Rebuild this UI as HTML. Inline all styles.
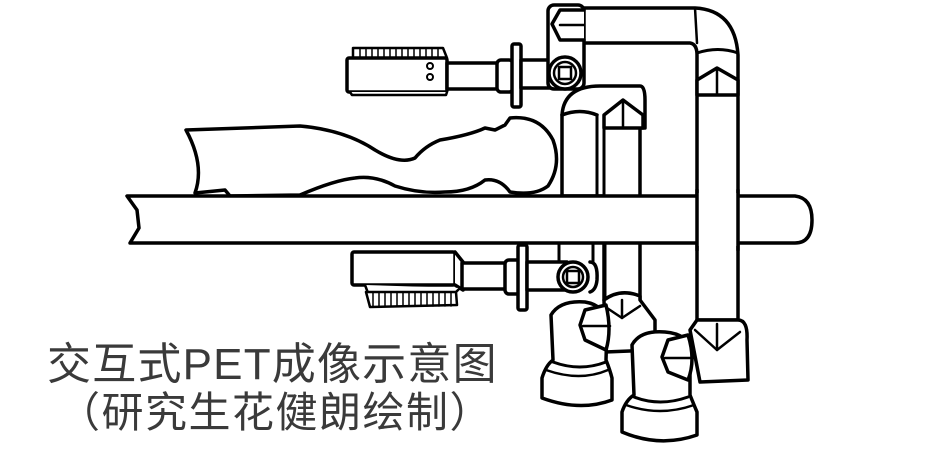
<!DOCTYPE html>
<html><head><meta charset="utf-8"><style>
html,body{margin:0;padding:0;background:#fff;width:952px;height:476px;overflow:hidden}
svg{position:absolute;left:0;top:0}
.t{position:absolute;font-family:"Liberation Sans","Noto Sans CJK SC",sans-serif;color:#3a3a3a;white-space:nowrap;line-height:1}
</style></head><body>
<svg width="952" height="476" viewBox="0 0 952 476" fill="#fff" stroke="#000" stroke-width="3.5" stroke-linejoin="round" stroke-linecap="round">
<!-- body -->
<path d="M186 130 Q240 128 300 126 Q345 130 375 150 Q400 165 415 158 Q425 146 440 140 Q470 135 485 128 L495 130 L505 125 L510 118 Q540 115 553 140 Q562 165 548 186 Q535 196 510 192 Q500 178 485 180 Q470 192 445 192 Q420 194 395 186 Q375 175 355 178 Q335 180 300 195 L230 196 L225 190 L195 193 Q205 165 186 130 Z"/>
<!-- upper detector -->
<path d="M353 48 L443 48 L447 58 L353 58 Z" stroke-width="2.5"/>
<g stroke-width="1.5"><path d="M360 48v9M366 48v9M372 48v9M378 48v9M384 48v9M390 48v9M396 48v9M402 48v9M408 48v9M414 48v9M420 48v9M426 48v9M432 48v9M438 48v9"/></g>
<rect x="347" y="58" width="100" height="34" rx="2"/>
<path d="M350 92 L352 95 L446 95 L447 92" stroke-width="2.5"/>
<circle cx="430" cy="66" r="3" stroke-width="2"/><circle cx="430" cy="77" r="3" stroke-width="2"/>
<rect x="447" y="63" width="52" height="26"/>
<rect x="497" y="60" width="16" height="32" rx="4"/>
<rect x="512" y="44" width="9" height="63" rx="2"/>
<rect x="521" y="60" width="30" height="28"/>
<!-- top pipe -->
<path d="M582 8 L695 8 Q735 10 738 55 L738 320 L697 320 L697 55 Q697 44 690 43 L582 43 Z"/>
<path d="M695 8 L697 43" stroke-width="2.5"/>
<path d="M697 53 Q718 46 738 53" stroke-width="3"/>
<rect x="548" y="5" width="36" height="84" rx="6"/>
<path d="M584 10 L560 10 L552 24 L560 40 L584 40" />
<path d="M560 25 L584 25" stroke-width="2.5"/>
<circle cx="565" cy="73" r="16"/><circle cx="565" cy="73" r="11" stroke-width="2.5"/><rect x="559" y="67" width="12" height="12" stroke-width="2.5"/>
<!-- vertical right cone -->
<path d="M697 80 L717 68 L738 80 L738 95 L697 95 Z"/>
<path d="M717 68 L717 95" stroke-width="2.5"/>
<!-- middle pipes -->
<path d="M562 196 L562 115 Q564 86 600 86 L640 86 Q645 86 645 100 L645 128 L640 128 L640 300 L604 300 L604 196 Z"/>
<path d="M597 115 L597 196 M604 115 L604 300" stroke-width="3"/>
<path d="M562 115 Q580 108 597 115"/>
<path d="M604 115 L623 100 L643 115 L643 128 L604 128 Z"/>
<path d="M623 100 L623 128" stroke-width="2.5"/>
<!-- table -->
<path d="M127 196 L795 196 Q812 198 812 220 Q812 243 795 243 L130 243 L139 228 L137 210 Z"/>
<rect x="698" y="193" width="39" height="53" stroke="none"/>
<path d="M697 190 L697 250 M738 190 L738 250" stroke-width="3.5" fill="none"/>
<path d="M559 243 L559 262 M593 243 L593 262 M605 243 L605 296 M640 243 L640 296" stroke-width="3" fill="none"/>
<!-- lower detector -->
<rect x="352" y="252" width="103" height="33" rx="2"/>
<path d="M455 252 L463 262 L463 290 L455 285" />
<path d="M365 285 L368 293 L455 293 L460 288" stroke-width="2.5"/>
<path d="M366 292 L456 292 L457 305 L370 307 Z" stroke-width="2.5"/>
<g stroke-width="1.5"><path d="M373 292v14M379 292v14M385 292v14M391 292v14M397 292v14M403 292v14M409 292v14M415 292v14M421 292v14M427 292v14M433 292v14M439 292v14M445 292v14M451 292v14"/></g>
<rect x="462" y="263" width="46" height="26"/>
<rect x="505" y="260" width="16" height="34" rx="4"/>
<rect x="518" y="245" width="9" height="65" rx="2"/>
<rect x="527" y="262" width="40" height="28"/>
<circle cx="573" cy="277" r="15"/><circle cx="573" cy="277" r="10" stroke-width="2.5"/><rect x="567" y="271" width="12" height="12" stroke-width="2.5"/>
<path d="M590 262 Q598 262 597 280 Q596 290 590 292" />
<!-- middle shoulder -->
<path d="M604 300 Q620 288 640 296 L640 300 L655 320 L655 350 L605 352 Z"/>
<path d="M604 306 L622 318 L640 306" stroke-width="2.5"/><path d="M622 300 L622 318" stroke-width="2.5"/>
<!-- right shoulder -->
<path d="M697 320 L738 320 Q748 320 747 340 L748 380 L700 382 L690 330 Z"/>
<path d="M695 330 L717 350 L740 332" stroke-width="2.5"/><path d="M717 324 L717 350" stroke-width="2.5"/>
<!-- left big cylinder -->
<path d="M551 315 Q560 300 585 302 Q605 305 607 325 L606 360 Q610 370 612 378 L612 400 Q580 412 542 398 L542 378 Q546 365 553 360 Z"/>
<path d="M553 362 Q580 372 606 362" stroke-width="3"/>
<path d="M546 370 Q580 382 608 370" stroke-width="2.5"/>
<path d="M606 305 L585 310 L580 325 L585 340 L606 350 Q612 330 606 305 Z"/>
<path d="M583 326 L610 326" stroke-width="2.5"/>
<!-- right big cylinder -->
<path d="M632 345 Q640 330 665 332 Q688 334 690 350 L690 395 Q694 405 697 412 L697 435 Q660 448 622 432 L622 412 Q626 400 634 395 Z"/>
<path d="M634 397 Q660 407 688 397" stroke-width="3"/>
<path d="M626 405 Q660 417 694 405" stroke-width="2.5"/>
<path d="M688 335 L668 340 L662 357 L668 372 L688 380 Q696 360 688 335 Z"/>
<path d="M665 358 L693 358" stroke-width="2.5"/>
</svg>
<div class="t" style="left:47px;top:343px;font-size:44px;letter-spacing:1.2px">交互式PET成像示意图</div>
<div class="t" style="left:58px;top:392px;font-size:42px;letter-spacing:1.5px">（研究生花健朗绘制）</div>
</body></html>
